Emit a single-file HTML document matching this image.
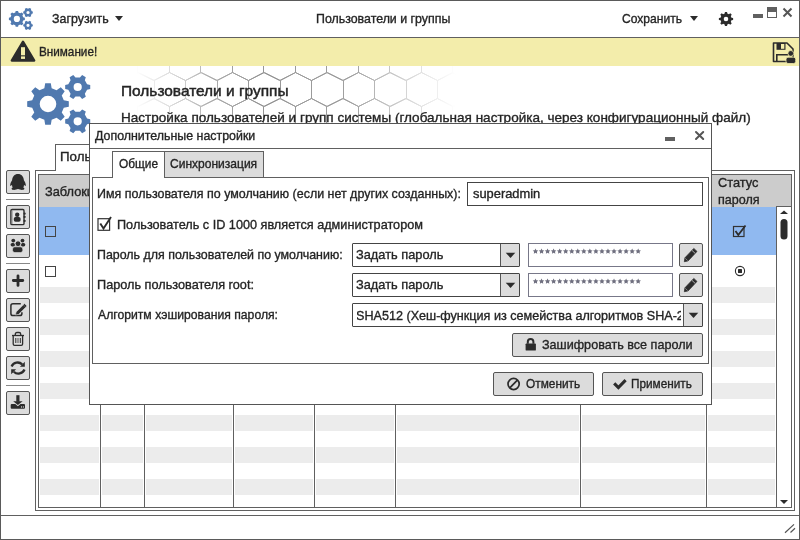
<!DOCTYPE html>
<html><head><meta charset="utf-8"><style>
html,body{margin:0;padding:0;width:800px;height:540px;overflow:hidden;background:#fff}
body{position:relative;font-family:"Liberation Sans", sans-serif}
.t{position:absolute;white-space:nowrap;line-height:1;font-family:"Liberation Sans", sans-serif;-webkit-text-stroke:0.35px currentColor;transform-origin:0 0}
svg{overflow:visible}
</style></head><body>
<div style="position:absolute;left:0px;top:0px;width:800px;height:540px;background:#fff"></div>
<div style="position:absolute;left:0px;top:37px;width:800px;height:1px;background:#606060"></div>
<div style="position:absolute;left:0px;top:38px;width:800px;height:28px;background:#F3EDAB"></div>
<svg width="24" height="22.5" viewBox="0 0 64 60" style="position:absolute;left:9px;top:7.9px">
<g fill="#5079AF" fill-rule="evenodd">
<path d="M16.83,12.21 L17.80,7.74 L24.20,7.74 L25.17,12.21 L29.92,14.18 L33.77,11.71 L38.29,16.23 L35.82,20.08 L37.79,24.83 L42.26,25.80 L42.26,32.20 L37.79,33.17 L35.82,37.92 L38.29,41.77 L33.77,46.29 L29.92,43.82 L25.17,45.79 L24.20,50.26 L17.80,50.26 L16.83,45.79 L12.08,43.82 L8.23,46.29 L3.71,41.77 L6.18,37.92 L4.21,33.17 L-0.26,32.20 L-0.26,25.80 L4.21,24.83 L6.18,20.08 L3.71,16.23 L8.23,11.71 L12.08,14.18Z M29.30,29.00 A8.3,8.3 0 1,0 12.70,29.00 A8.3,8.3 0 1,0 29.30,29.00Z"/><path d="M60.78,8.72 L63.47,9.56 L63.47,14.44 L60.78,15.28 L58.58,19.09 L59.19,21.84 L54.98,24.28 L52.90,22.37 L48.50,22.37 L46.42,24.28 L42.21,21.84 L42.82,19.09 L40.62,15.28 L37.93,14.44 L37.93,9.56 L40.62,8.72 L42.82,4.91 L42.21,2.16 L46.42,-0.28 L48.50,1.63 L52.90,1.63 L54.98,-0.28 L59.19,2.16 L58.58,4.91Z M55.00,12.00 A4.3,4.3 0 1,0 46.40,12.00 A4.3,4.3 0 1,0 55.00,12.00Z"/><path d="M60.78,43.02 L63.47,43.86 L63.47,48.74 L60.78,49.58 L58.58,53.39 L59.19,56.14 L54.98,58.58 L52.90,56.67 L48.50,56.67 L46.42,58.58 L42.21,56.14 L42.82,53.39 L40.62,49.58 L37.93,48.74 L37.93,43.86 L40.62,43.02 L42.82,39.21 L42.21,36.46 L46.42,34.02 L48.50,35.93 L52.90,35.93 L54.98,34.02 L59.19,36.46 L58.58,39.21Z M55.00,46.30 A4.3,4.3 0 1,0 46.40,46.30 A4.3,4.3 0 1,0 55.00,46.30Z"/>
</g></svg>
<div class="t" style="left:51.50px;top:13.26px;font-size:12.8px;color:#242424;transform:scaleX(0.9700);">Загрузить</div>
<div style="position:absolute;left:115px;top:16px;width:0;height:0;border-left:4.5px solid transparent;border-right:4.5px solid transparent;border-top:5px solid #2c2c2c"></div>
<div class="t" style="left:316.05px;top:12.20px;font-size:13px;color:#242424;transform:scaleX(0.9518);">Пользователи и группы</div>
<div class="t" style="left:621.90px;top:13.26px;font-size:12.8px;color:#242424;transform:scaleX(0.9441);">Сохранить</div>
<div style="position:absolute;left:689.5px;top:16px;width:0;height:0;border-left:4.5px solid transparent;border-right:4.5px solid transparent;border-top:5px solid #2c2c2c"></div>
<svg style="position:absolute;left:0;top:0" width="800" height="40"><path fill="#2c2c2c" fill-rule="evenodd" d="M724.69,13.55 L724.93,11.88 L727.07,11.88 L727.31,13.55 L728.93,14.23 L730.28,13.21 L731.79,14.72 L730.77,16.07 L731.45,17.69 L733.12,17.93 L733.12,20.07 L731.45,20.31 L730.77,21.93 L731.79,23.28 L730.28,24.79 L728.93,23.77 L727.31,24.45 L727.07,26.12 L724.93,26.12 L724.69,24.45 L723.07,23.77 L721.72,24.79 L720.21,23.28 L721.23,21.93 L720.55,20.31 L718.88,20.07 L718.88,17.93 L720.55,17.69 L721.23,16.07 L720.21,14.72 L721.72,13.21 L723.07,14.23Z M728.30,19.00 A2.3,2.3 0 1,0 723.70,19.00 A2.3,2.3 0 1,0 728.30,19.00Z"/></svg>
<div style="position:absolute;left:753px;top:14px;width:10px;height:4px;background:#606060"></div>
<div style="position:absolute;left:767px;top:7px;width:10px;height:11px;box-sizing:border-box;border:1px solid #606060;background:#fff;"></div>
<div style="position:absolute;left:767px;top:7px;width:10px;height:5px;background:#606060"></div>
<svg style="position:absolute;left:0;top:0" width="800" height="40"><path d="M783.5,8.5 L791.5,16.5 M791.5,8.5 L783.5,16.5" stroke="#555" stroke-width="2"/></svg>
<svg style="position:absolute;left:0;top:38" width="800" height="28"></svg>
<svg style="position:absolute;left:0;top:0" width="800" height="70">
<path d="M23,41.6 L34.3,60.6 L11.7,60.6 Z" fill="#2c2c2c" stroke="#2c2c2c" stroke-width="2.2" stroke-linejoin="round"/>
<rect x="21" y="47.2" width="4" height="8.1" fill="#F3EDAB"/><rect x="21" y="56.4" width="4" height="2.5" fill="#F3EDAB"/>
</svg>
<div class="t" style="left:38.60px;top:45.40px;font-size:13px;color:#242424;transform:scaleX(0.9007);">Внимание!</div>
<svg style="position:absolute;left:0;top:0" width="800" height="70">
<path d="M773.5,43 H787 L793,49 V61.5 H773.5 Z" fill="none" stroke="#2c2c2c" stroke-width="1.6" stroke-linejoin="round"/>
<rect x="776.5" y="43" width="9" height="6.8" fill="#2c2c2c"/><rect x="781" y="44" width="3.3" height="4.8" fill="#F3EDAB"/>
<path d="M776.8,61.5 V54.8 H788" fill="none" stroke="#2c2c2c" stroke-width="1.6"/>
<circle cx="790.8" cy="53.4" r="2.9" fill="#2c2c2c" stroke="#F3EDAB" stroke-width="0.8"/>
<rect x="786" y="57.2" width="9.7" height="6.3" rx="2" fill="#2c2c2c" stroke="#F3EDAB" stroke-width="0.8"/>
</svg>
<svg width="64" height="60" viewBox="0 0 64 60" style="position:absolute;left:27px;top:75px">
<g fill="#5079AF" fill-rule="evenodd">
<path d="M17.34,13.22 L18.20,8.19 L23.80,8.19 L24.66,13.22 L29.57,15.25 L33.74,12.31 L37.69,16.26 L34.75,20.43 L36.78,25.34 L41.81,26.20 L41.81,31.80 L36.78,32.66 L34.75,37.57 L37.69,41.74 L33.74,45.69 L29.57,42.75 L24.66,44.78 L23.80,49.81 L18.20,49.81 L17.34,44.78 L12.43,42.75 L8.26,45.69 L4.31,41.74 L7.25,37.57 L5.22,32.66 L0.19,31.80 L0.19,26.20 L5.22,25.34 L7.25,20.43 L4.31,16.26 L8.26,12.31 L12.43,15.25Z M29.30,29.00 A8.3,8.3 0 1,0 12.70,29.00 A8.3,8.3 0 1,0 29.30,29.00Z"/><path d="M60.08,9.17 L63.22,9.88 L63.22,14.12 L60.08,14.83 L57.84,18.71 L58.80,21.79 L55.13,23.90 L52.94,21.54 L48.46,21.54 L46.27,23.90 L42.60,21.79 L43.56,18.71 L41.32,14.83 L38.18,14.12 L38.18,9.88 L41.32,9.17 L43.56,5.29 L42.60,2.21 L46.27,0.10 L48.46,2.46 L52.94,2.46 L55.13,0.10 L58.80,2.21 L57.84,5.29Z M54.80,12.00 A4.1,4.1 0 1,0 46.60,12.00 A4.1,4.1 0 1,0 54.80,12.00Z"/><path d="M60.08,43.47 L63.22,44.18 L63.22,48.42 L60.08,49.13 L57.84,53.01 L58.80,56.09 L55.13,58.20 L52.94,55.84 L48.46,55.84 L46.27,58.20 L42.60,56.09 L43.56,53.01 L41.32,49.13 L38.18,48.42 L38.18,44.18 L41.32,43.47 L43.56,39.59 L42.60,36.51 L46.27,34.40 L48.46,36.76 L52.94,36.76 L55.13,34.40 L58.80,36.51 L57.84,39.59Z M54.80,46.30 A4.1,4.1 0 1,0 46.60,46.30 A4.1,4.1 0 1,0 54.80,46.30Z"/>
</g></svg>
<svg style="position:absolute;left:0;top:66px;overflow:hidden" width="800" height="57" viewBox="0 66 800 57"><defs><linearGradient id="hg" x1="0" x2="800" y1="0" y2="0" gradientUnits="userSpaceOnUse"><stop offset="0.17" stop-color="#fff" stop-opacity="0"/><stop offset="0.27" stop-color="#fff" stop-opacity="0.8"/><stop offset="0.32" stop-color="#fff" stop-opacity="1"/><stop offset="0.44" stop-color="#fff" stop-opacity="0.9"/><stop offset="0.5" stop-color="#fff" stop-opacity="0.45"/><stop offset="0.57" stop-color="#fff" stop-opacity="0"/></linearGradient><mask id="hm"><rect x="0" y="0" width="800" height="200" fill="url(#hg)"/></mask></defs><path mask="url(#hm)" fill="none" stroke="#959595" stroke-width="1" d="M90.5,46.5 L106.5,54.5 L106.5,72.5 L90.5,80.5 L74.5,72.5 L74.5,54.5Z M122.5,46.5 L137.5,54.5 L137.5,72.5 L122.5,80.5 L106.5,72.5 L106.5,54.5Z M153.5,46.5 L169.5,54.5 L169.5,72.5 L153.5,80.5 L137.5,72.5 L137.5,54.5Z M185.5,46.5 L200.5,54.5 L200.5,72.5 L185.5,80.5 L169.5,72.5 L169.5,54.5Z M216.5,46.5 L232.5,54.5 L232.5,72.5 L216.5,80.5 L200.5,72.5 L200.5,54.5Z M248.5,46.5 L263.5,54.5 L263.5,72.5 L248.5,80.5 L232.5,72.5 L232.5,54.5Z M279.5,46.5 L295.5,54.5 L295.5,72.5 L279.5,80.5 L263.5,72.5 L263.5,54.5Z M311.5,46.5 L326.5,54.5 L326.5,72.5 L311.5,80.5 L295.5,72.5 L295.5,54.5Z M342.5,46.5 L358.5,54.5 L358.5,72.5 L342.5,80.5 L326.5,72.5 L326.5,54.5Z M374.5,46.5 L389.5,54.5 L389.5,72.5 L374.5,80.5 L358.5,72.5 L358.5,54.5Z M405.5,46.5 L421.5,54.5 L421.5,72.5 L405.5,80.5 L389.5,72.5 L389.5,54.5Z M437.5,46.5 L452.5,54.5 L452.5,72.5 L437.5,80.5 L421.5,72.5 L421.5,54.5Z M468.5,46.5 L484.5,54.5 L484.5,72.5 L468.5,80.5 L452.5,72.5 L452.5,54.5Z M106.5,72.5 L122.5,80.5 L122.5,98.5 L106.5,106.5 L91.5,98.5 L91.5,80.5Z M138.5,72.5 L154.5,80.5 L154.5,98.5 L138.5,106.5 L122.5,98.5 L122.5,80.5Z M169.5,72.5 L185.5,80.5 L185.5,98.5 L169.5,106.5 L154.5,98.5 L154.5,80.5Z M201.5,72.5 L217.5,80.5 L217.5,98.5 L201.5,106.5 L185.5,98.5 L185.5,80.5Z M232.5,72.5 L248.5,80.5 L248.5,98.5 L232.5,106.5 L217.5,98.5 L217.5,80.5Z M264.5,72.5 L280.5,80.5 L280.5,98.5 L264.5,106.5 L248.5,98.5 L248.5,80.5Z M295.5,72.5 L311.5,80.5 L311.5,98.5 L295.5,106.5 L280.5,98.5 L280.5,80.5Z M327.5,72.5 L343.5,80.5 L343.5,98.5 L327.5,106.5 L311.5,98.5 L311.5,80.5Z M358.5,72.5 L374.5,80.5 L374.5,98.5 L358.5,106.5 L343.5,98.5 L343.5,80.5Z M390.5,72.5 L406.5,80.5 L406.5,98.5 L390.5,106.5 L374.5,98.5 L374.5,80.5Z M421.5,72.5 L437.5,80.5 L437.5,98.5 L421.5,106.5 L406.5,98.5 L406.5,80.5Z M453.5,72.5 L469.5,80.5 L469.5,98.5 L453.5,106.5 L437.5,98.5 L437.5,80.5Z M90.5,98.5 L106.5,106.5 L106.5,124.5 L90.5,132.5 L74.5,124.5 L74.5,106.5Z M122.5,98.5 L137.5,106.5 L137.5,124.5 L122.5,132.5 L106.5,124.5 L106.5,106.5Z M153.5,98.5 L169.5,106.5 L169.5,124.5 L153.5,132.5 L137.5,124.5 L137.5,106.5Z M185.5,98.5 L200.5,106.5 L200.5,124.5 L185.5,132.5 L169.5,124.5 L169.5,106.5Z M216.5,98.5 L232.5,106.5 L232.5,124.5 L216.5,132.5 L200.5,124.5 L200.5,106.5Z M248.5,98.5 L263.5,106.5 L263.5,124.5 L248.5,132.5 L232.5,124.5 L232.5,106.5Z M279.5,98.5 L295.5,106.5 L295.5,124.5 L279.5,132.5 L263.5,124.5 L263.5,106.5Z M311.5,98.5 L326.5,106.5 L326.5,124.5 L311.5,132.5 L295.5,124.5 L295.5,106.5Z M342.5,98.5 L358.5,106.5 L358.5,124.5 L342.5,132.5 L326.5,124.5 L326.5,106.5Z M374.5,98.5 L389.5,106.5 L389.5,124.5 L374.5,132.5 L358.5,124.5 L358.5,106.5Z M405.5,98.5 L421.5,106.5 L421.5,124.5 L405.5,132.5 L389.5,124.5 L389.5,106.5Z M437.5,98.5 L452.5,106.5 L452.5,124.5 L437.5,132.5 L421.5,124.5 L421.5,106.5Z M468.5,98.5 L484.5,106.5 L484.5,124.5 L468.5,132.5 L452.5,124.5 L452.5,106.5Z M106.5,124.5 L122.5,132.5 L122.5,150.5 L106.5,158.5 L91.5,150.5 L91.5,132.5Z M138.5,124.5 L154.5,132.5 L154.5,150.5 L138.5,158.5 L122.5,150.5 L122.5,132.5Z M169.5,124.5 L185.5,132.5 L185.5,150.5 L169.5,158.5 L154.5,150.5 L154.5,132.5Z M201.5,124.5 L217.5,132.5 L217.5,150.5 L201.5,158.5 L185.5,150.5 L185.5,132.5Z M232.5,124.5 L248.5,132.5 L248.5,150.5 L232.5,158.5 L217.5,150.5 L217.5,132.5Z M264.5,124.5 L280.5,132.5 L280.5,150.5 L264.5,158.5 L248.5,150.5 L248.5,132.5Z M295.5,124.5 L311.5,132.5 L311.5,150.5 L295.5,158.5 L280.5,150.5 L280.5,132.5Z M327.5,124.5 L343.5,132.5 L343.5,150.5 L327.5,158.5 L311.5,150.5 L311.5,132.5Z M358.5,124.5 L374.5,132.5 L374.5,150.5 L358.5,158.5 L343.5,150.5 L343.5,132.5Z M390.5,124.5 L406.5,132.5 L406.5,150.5 L390.5,158.5 L374.5,150.5 L374.5,132.5Z M421.5,124.5 L437.5,132.5 L437.5,150.5 L421.5,158.5 L406.5,150.5 L406.5,132.5Z M453.5,124.5 L469.5,132.5 L469.5,150.5 L453.5,158.5 L437.5,150.5 L437.5,132.5Z"/></svg>
<div class="t" style="left:120.86px;top:83.57px;font-size:14.8px;color:#242424;transform:scaleX(1.0431);-webkit-text-stroke:0.45px currentColor">Пользователи и группы</div>
<div class="t" style="left:120.78px;top:110.74px;font-size:13.3px;color:#242424;transform:scaleX(1.0179);">Настройка пользователей и групп системы (глобальная настройка, через конфигурационный файл)</div>
<div style="position:absolute;left:6px;top:170px;width:24px;height:24px;box-sizing:border-box;border:1px solid #555;background:#DCDCDC;border-radius:2px"></div>
<svg style="position:absolute;left:6px;top:170px" width="24" height="24" viewBox="0 0 24 24"><path fill="#2c2c2c" d="M12,4 C15.5,4 17.6,6.5 17.9,10.3 C19,11.8 19.8,13.8 19.9,15.9 C19.2,15.8 18.5,15.4 18,15 C18,16.1 17.7,17 17.2,17.6 C18.2,17.8 18.5,18.4 18.3,19 C18,19.7 17.2,19.9 16,19.9 C14.5,19.9 13.2,19.5 12,19.1 C10.8,19.5 9.5,19.9 8,19.9 C6.8,19.9 6,19.7 5.7,19 C5.5,18.4 5.8,17.8 6.8,17.6 C6.3,17 6,16.1 6,15 C5.5,15.4 4.8,15.8 4.1,15.9 C4.2,13.8 5,11.8 6.1,10.3 C6.4,6.5 8.5,4 12,4Z"/></svg>
<div style="position:absolute;left:6px;top:199px;width:24px;height:1px;background:#888"></div>
<div style="position:absolute;left:6px;top:205px;width:24px;height:24px;box-sizing:border-box;border:1px solid #555;background:#DCDCDC;border-radius:2px"></div>
<svg style="position:absolute;left:6px;top:205px" width="24" height="24" viewBox="0 0 24 24"><rect x="4.9" y="4.5" width="13.1" height="15.1" rx="1.2" fill="#e6e6e6" stroke="#2c2c2c" stroke-width="1.4"/><path d="M6.3,5 V19" stroke="#999" stroke-width="0.8"/><circle cx="18.6" cy="8.7" r="1.15" fill="#2c2c2c"/><circle cx="18.6" cy="11.9" r="1.15" fill="#2c2c2c"/><circle cx="18.6" cy="15.9" r="1.15" fill="#2c2c2c"/><circle cx="11.2" cy="9.7" r="2.2" fill="#2c2c2c"/><rect x="7.8" y="12" width="6.8" height="4.7" rx="1.7" fill="#2c2c2c"/></svg>
<div style="position:absolute;left:6px;top:234px;width:24px;height:24px;box-sizing:border-box;border:1px solid #555;background:#DCDCDC;border-radius:2px"></div>
<svg style="position:absolute;left:6px;top:234px" width="24" height="24" viewBox="0 0 24 24"><circle cx="7.3" cy="6.6" r="1.9" fill="#2c2c2c"/><circle cx="16.5" cy="6.6" r="1.9" fill="#2c2c2c"/><rect x="4.6" y="9" width="4.4" height="3.4" rx="1.6" fill="#2c2c2c"/><rect x="14.9" y="9" width="4.4" height="3.4" rx="1.6" fill="#2c2c2c"/><circle cx="12" cy="9.7" r="2.9" fill="#2c2c2c" stroke="#DCDCDC" stroke-width="0.9"/><rect x="6.5" y="12.8" width="10.3" height="5.8" rx="2.3" fill="#2c2c2c" stroke="#DCDCDC" stroke-width="0.7"/></svg>
<div style="position:absolute;left:6px;top:263px;width:24px;height:1px;background:#888"></div>
<div style="position:absolute;left:6px;top:269px;width:24px;height:24px;box-sizing:border-box;border:1px solid #555;background:#DCDCDC;border-radius:2px"></div>
<svg style="position:absolute;left:6px;top:269px" width="24" height="24" viewBox="0 0 24 24"><path d="M7.3,11.5 H16.8 M12,6.8 V16.4" stroke="#2c2c2c" stroke-width="2.8" stroke-linecap="round"/></svg>
<div style="position:absolute;left:6px;top:298px;width:24px;height:24px;box-sizing:border-box;border:1px solid #555;background:#DCDCDC;border-radius:2px"></div>
<svg style="position:absolute;left:6px;top:298px" width="24" height="24" viewBox="0 0 24 24"><path d="M14.8,5.7 H7 Q4.9,5.7 4.9,7.8 V15.5 Q4.9,17.6 7,17.6 H13.8 Q15.9,17.6 15.9,15.5 V14.3" fill="none" stroke="#2c2c2c" stroke-width="1.5"/><path d="M9.5,17 L10.1,14 L18.6,5.6 L21,8 L12.5,16.4Z" fill="#2c2c2c" stroke="#DCDCDC" stroke-width="0.6"/><path d="M17.3,6.9 L19.7,9.3" stroke="#777" stroke-width="0.6"/></svg>
<div style="position:absolute;left:6px;top:327px;width:24px;height:24px;box-sizing:border-box;border:1px solid #555;background:#DCDCDC;border-radius:2px"></div>
<svg style="position:absolute;left:6px;top:327px" width="24" height="24" viewBox="0 0 24 24"><path d="M6,8.5 H18" stroke="#2c2c2c" stroke-width="1.3"/><path d="M9.3,8.3 V7 Q9.3,5.5 11,5.5 H13 Q14.7,5.5 14.7,7 V8.3" fill="none" stroke="#2c2c2c" stroke-width="1.3"/><path d="M7.2,8.8 V17 Q7.2,18.4 8.6,18.4 H15.2 Q16.6,18.4 16.6,17 V8.8" fill="none" stroke="#2c2c2c" stroke-width="1.3"/><path d="M9.8,11 V16 M14.3,11 V16" stroke="#2c2c2c" stroke-width="1"/><path d="M12,11 V16" stroke="#888" stroke-width="1.6"/></svg>
<div style="position:absolute;left:6px;top:356px;width:24px;height:24px;box-sizing:border-box;border:1px solid #555;background:#DCDCDC;border-radius:2px"></div>
<svg style="position:absolute;left:6px;top:356px" width="24" height="24" viewBox="0 0 24 24"><path d="M5.6,10.5 A6.6,6.6 0 0,1 16.2,8.3" fill="none" stroke="#2c2c2c" stroke-width="2.3"/><path d="M18.8,5.8 V10.7 H13.9Z" fill="#2c2c2c"/><path d="M18.5,13.5 A6.6,6.6 0 0,1 7.8,15.7" fill="none" stroke="#2c2c2c" stroke-width="2.3"/><path d="M5.2,18.2 V13.3 H10.1Z" fill="#2c2c2c"/></svg>
<div style="position:absolute;left:6px;top:385px;width:24px;height:1px;background:#888"></div>
<div style="position:absolute;left:6px;top:391px;width:24px;height:24px;box-sizing:border-box;border:1px solid #555;background:#DCDCDC;border-radius:2px"></div>
<svg style="position:absolute;left:6px;top:391px" width="24" height="24" viewBox="0 0 24 24"><rect x="10.3" y="4.2" width="3.2" height="6.6" fill="#2c2c2c"/><path d="M7.2,10.3 H16.6 L11.9,14Z" fill="#2c2c2c"/><path d="M5.7,13 H9.3 L11.9,15.3 L14.5,13 H18 Q19,13 19,14 V16.8 Q19,17.8 18,17.8 H5.7 Q4.7,17.8 4.7,16.8 V14 Q4.7,13 5.7,13Z" fill="#2c2c2c"/><rect x="15.1" y="15.1" width="0.9" height="1.7" fill="#bbb"/><rect x="16.9" y="15.1" width="0.9" height="1.7" fill="#bbb"/></svg>
<div style="position:absolute;left:55px;top:144px;width:66px;height:28px;box-sizing:border-box;border:1px solid #606060;background:#fff;"></div>
<div style="position:absolute;left:35px;top:170px;width:760px;height:341px;box-sizing:border-box;border:1px solid #606060;background:#fff;"></div>
<div style="position:absolute;left:56px;top:170px;width:63px;height:1px;background:#fff"></div>
<div class="t" style="left:60.48px;top:150.10px;font-size:13px;color:#242424;transform:scaleX(1.0243);">Пользователи</div>
<div style="position:absolute;left:38px;top:174px;width:754px;height:334px;box-sizing:border-box;border:1px solid #606060;background:#fff;"></div>
<div style="position:absolute;left:39px;top:175px;width:752px;height:32px;background:#CCCCCC"></div>
<div class="t" style="left:45.10px;top:186.46px;font-size:12.8px;color:#242424;transform:scaleX(0.9980);">Заблокирован</div>
<div class="t" style="left:718.00px;top:176.30px;font-size:13px;color:#242424;transform:scaleX(0.9857);">Статус</div>
<div class="t" style="left:718.30px;top:192.90px;font-size:13px;color:#242424;transform:scaleX(0.9645);">пароля</div>
<div style="position:absolute;left:39px;top:207px;width:737px;height:48px;background:#90B9F0"></div>
<div style="position:absolute;left:40px;top:287px;width:59px;height:16px;background:#ECECEC"></div>
<div style="position:absolute;left:102px;top:287px;width:41px;height:16px;background:#ECECEC"></div>
<div style="position:absolute;left:146px;top:287px;width:86px;height:16px;background:#ECECEC"></div>
<div style="position:absolute;left:235px;top:287px;width:78px;height:16px;background:#ECECEC"></div>
<div style="position:absolute;left:316px;top:287px;width:78px;height:16px;background:#ECECEC"></div>
<div style="position:absolute;left:397px;top:287px;width:182px;height:16px;background:#ECECEC"></div>
<div style="position:absolute;left:582px;top:287px;width:123px;height:16px;background:#ECECEC"></div>
<div style="position:absolute;left:708px;top:287px;width:67px;height:16px;background:#ECECEC"></div>
<div style="position:absolute;left:40px;top:319px;width:59px;height:16px;background:#ECECEC"></div>
<div style="position:absolute;left:102px;top:319px;width:41px;height:16px;background:#ECECEC"></div>
<div style="position:absolute;left:146px;top:319px;width:86px;height:16px;background:#ECECEC"></div>
<div style="position:absolute;left:235px;top:319px;width:78px;height:16px;background:#ECECEC"></div>
<div style="position:absolute;left:316px;top:319px;width:78px;height:16px;background:#ECECEC"></div>
<div style="position:absolute;left:397px;top:319px;width:182px;height:16px;background:#ECECEC"></div>
<div style="position:absolute;left:582px;top:319px;width:123px;height:16px;background:#ECECEC"></div>
<div style="position:absolute;left:708px;top:319px;width:67px;height:16px;background:#ECECEC"></div>
<div style="position:absolute;left:40px;top:351px;width:59px;height:16px;background:#ECECEC"></div>
<div style="position:absolute;left:102px;top:351px;width:41px;height:16px;background:#ECECEC"></div>
<div style="position:absolute;left:146px;top:351px;width:86px;height:16px;background:#ECECEC"></div>
<div style="position:absolute;left:235px;top:351px;width:78px;height:16px;background:#ECECEC"></div>
<div style="position:absolute;left:316px;top:351px;width:78px;height:16px;background:#ECECEC"></div>
<div style="position:absolute;left:397px;top:351px;width:182px;height:16px;background:#ECECEC"></div>
<div style="position:absolute;left:582px;top:351px;width:123px;height:16px;background:#ECECEC"></div>
<div style="position:absolute;left:708px;top:351px;width:67px;height:16px;background:#ECECEC"></div>
<div style="position:absolute;left:40px;top:383px;width:59px;height:16px;background:#ECECEC"></div>
<div style="position:absolute;left:102px;top:383px;width:41px;height:16px;background:#ECECEC"></div>
<div style="position:absolute;left:146px;top:383px;width:86px;height:16px;background:#ECECEC"></div>
<div style="position:absolute;left:235px;top:383px;width:78px;height:16px;background:#ECECEC"></div>
<div style="position:absolute;left:316px;top:383px;width:78px;height:16px;background:#ECECEC"></div>
<div style="position:absolute;left:397px;top:383px;width:182px;height:16px;background:#ECECEC"></div>
<div style="position:absolute;left:582px;top:383px;width:123px;height:16px;background:#ECECEC"></div>
<div style="position:absolute;left:708px;top:383px;width:67px;height:16px;background:#ECECEC"></div>
<div style="position:absolute;left:40px;top:415px;width:59px;height:16px;background:#ECECEC"></div>
<div style="position:absolute;left:102px;top:415px;width:41px;height:16px;background:#ECECEC"></div>
<div style="position:absolute;left:146px;top:415px;width:86px;height:16px;background:#ECECEC"></div>
<div style="position:absolute;left:235px;top:415px;width:78px;height:16px;background:#ECECEC"></div>
<div style="position:absolute;left:316px;top:415px;width:78px;height:16px;background:#ECECEC"></div>
<div style="position:absolute;left:397px;top:415px;width:182px;height:16px;background:#ECECEC"></div>
<div style="position:absolute;left:582px;top:415px;width:123px;height:16px;background:#ECECEC"></div>
<div style="position:absolute;left:708px;top:415px;width:67px;height:16px;background:#ECECEC"></div>
<div style="position:absolute;left:40px;top:447px;width:59px;height:16px;background:#ECECEC"></div>
<div style="position:absolute;left:102px;top:447px;width:41px;height:16px;background:#ECECEC"></div>
<div style="position:absolute;left:146px;top:447px;width:86px;height:16px;background:#ECECEC"></div>
<div style="position:absolute;left:235px;top:447px;width:78px;height:16px;background:#ECECEC"></div>
<div style="position:absolute;left:316px;top:447px;width:78px;height:16px;background:#ECECEC"></div>
<div style="position:absolute;left:397px;top:447px;width:182px;height:16px;background:#ECECEC"></div>
<div style="position:absolute;left:582px;top:447px;width:123px;height:16px;background:#ECECEC"></div>
<div style="position:absolute;left:708px;top:447px;width:67px;height:16px;background:#ECECEC"></div>
<div style="position:absolute;left:40px;top:479px;width:59px;height:16px;background:#ECECEC"></div>
<div style="position:absolute;left:102px;top:479px;width:41px;height:16px;background:#ECECEC"></div>
<div style="position:absolute;left:146px;top:479px;width:86px;height:16px;background:#ECECEC"></div>
<div style="position:absolute;left:235px;top:479px;width:78px;height:16px;background:#ECECEC"></div>
<div style="position:absolute;left:316px;top:479px;width:78px;height:16px;background:#ECECEC"></div>
<div style="position:absolute;left:397px;top:479px;width:182px;height:16px;background:#ECECEC"></div>
<div style="position:absolute;left:582px;top:479px;width:123px;height:16px;background:#ECECEC"></div>
<div style="position:absolute;left:708px;top:479px;width:67px;height:16px;background:#ECECEC"></div>
<div style="position:absolute;left:100px;top:207px;width:1px;height:300px;background:#606060"></div>
<div style="position:absolute;left:144px;top:207px;width:1px;height:300px;background:#606060"></div>
<div style="position:absolute;left:233px;top:207px;width:1px;height:300px;background:#606060"></div>
<div style="position:absolute;left:314px;top:207px;width:1px;height:300px;background:#606060"></div>
<div style="position:absolute;left:395px;top:207px;width:1px;height:300px;background:#606060"></div>
<div style="position:absolute;left:580px;top:207px;width:1px;height:300px;background:#606060"></div>
<div style="position:absolute;left:706px;top:207px;width:1px;height:300px;background:#606060"></div>
<div style="position:absolute;left:45px;top:226px;width:11px;height:11px;box-sizing:border-box;border:1px solid #444;background:#90B9F0;"></div>
<div style="position:absolute;left:45px;top:266px;width:11px;height:11px;box-sizing:border-box;border:1px solid #444;background:#fff;"></div>
<svg style="position:absolute;left:0;top:0" width="800" height="540"><rect x="733.5" y="226.5" width="10.5" height="10" fill="none" stroke="#333" stroke-width="1.2"/><path d="M735.5,231 L738.3,235 L745.5,225.5" fill="none" stroke="#2c2c2c" stroke-width="1.8"/><circle cx="740" cy="271" r="4.6" fill="#fff" stroke="#2c2c2c" stroke-width="1.1"/><rect x="738" y="269" width="4" height="4" rx="0.5" fill="#2c2c2c"/></svg>
<div style="position:absolute;left:776px;top:206px;width:16px;height:302px;box-sizing:border-box;border:1px solid #606060;background:#fff;"></div>
<svg style="position:absolute;left:0;top:0" width="800" height="540"><path d="M780,214 L788,214 L784,210.5Z" fill="#2c2c2c"/><rect x="780.5" y="219" width="7" height="20.5" rx="3.5" fill="#2c2c2c"/><path d="M780,500 L788,500 L784,504Z" fill="#2c2c2c"/></svg>
<div style="position:absolute;left:0px;top:515px;width:800px;height:1px;background:#606060"></div>
<svg style="position:absolute;left:0;top:0" width="800" height="540"><path d="M785,532.8 L794,524.4 M790.5,532.5 L795,528.3" stroke="#555" stroke-width="1.2"/></svg>
<div style="position:absolute;left:89px;top:123px;width:623px;height:282px;box-sizing:border-box;border:1px solid #555;background:#fff;"></div>
<div style="position:absolute;left:90px;top:148px;width:621px;height:1px;background:#606060"></div>
<div class="t" style="left:94.50px;top:128.83px;font-size:13.2px;color:#242424;transform:scaleX(0.9400);">Дополнительные настройки</div>
<div style="position:absolute;left:665px;top:137px;width:10px;height:4px;background:#606060"></div>
<svg style="position:absolute;left:0;top:0" width="800" height="540"><path d="M696,132 L703.2,139 M703.2,132 L696,139" stroke="#555" stroke-width="2" stroke-linecap="round"/></svg>
<div style="position:absolute;left:92px;top:177px;width:617px;height:187px;box-sizing:border-box;border:1px solid #606060;background:#fff;"></div>
<div style="position:absolute;left:164px;top:151px;width:100px;height:27px;box-sizing:border-box;border:1px solid #606060;background:#DCDCDC;"></div>
<div style="position:absolute;left:112px;top:151px;width:53px;height:27px;box-sizing:border-box;border:1px solid #606060;background:#fff;"></div>
<div style="position:absolute;left:113px;top:177px;width:51px;height:1px;background:#fff"></div>
<div class="t" style="left:118.80px;top:158.26px;font-size:12.8px;color:#242424;transform:scaleX(0.9271);">Общие</div>
<div class="t" style="left:170.40px;top:158.26px;font-size:12.8px;color:#242424;transform:scaleX(0.9400);">Синхронизация</div>
<div class="t" style="left:96.65px;top:187.31px;font-size:13.1px;color:#242424;transform:scaleX(0.9514);">Имя пользователя по умолчанию (если нет других созданных):</div>
<div style="position:absolute;left:467px;top:182px;width:236px;height:24px;box-sizing:border-box;border:1px solid #444;background:#fff;"></div>
<div class="t" style="left:472.50px;top:188.43px;font-size:12.6px;color:#242424;transform:scaleX(1.0220);">superadmin</div>
<svg style="position:absolute;left:0;top:0" width="800" height="540"><rect x="98" y="218.7" width="11.6" height="11.6" fill="#fff" stroke="#333" stroke-width="1.2"/><path d="M100.3,223.5 L103.5,228.5 L111,217" fill="none" stroke="#2c2c2c" stroke-width="1.9"/></svg>
<div class="t" style="left:116.53px;top:218.31px;font-size:13.1px;color:#242424;transform:scaleX(0.9681);">Пользователь с ID 1000 является администратором</div>
<div class="t" style="left:96.65px;top:247.51px;font-size:13.1px;color:#242424;transform:scaleX(0.9485);">Пароль для пользователей по умолчанию:</div>
<div class="t" style="left:96.63px;top:277.76px;font-size:13.1px;color:#242424;transform:scaleX(0.9701);">Пароль пользователя root:</div>
<div class="t" style="left:97.60px;top:307.76px;font-size:13.1px;color:#242424;transform:scaleX(0.9308);">Алгоритм хэширования пароля:</div>
<div style="position:absolute;left:352px;top:243px;width:168px;height:24px;box-sizing:border-box;border:1px solid #444;background:#fff;border-radius:1px"></div>
<div style="position:absolute;left:500px;top:244px;width:19px;height:22px;background:#DCDCDC;border-left:1px solid #555;box-sizing:border-box"></div>
<svg style="position:absolute;left:0;top:0" width="800" height="540"><path d="M505.70,252.80 h9.6 l-4.8,5.1z" fill="#2c2c2c"/></svg>
<div class="t" style="left:356.25px;top:247.84px;font-size:13.3px;color:#242424;transform:scaleX(0.9631);">Задать пароль</div>
<div style="position:absolute;left:352px;top:273px;width:168px;height:24px;box-sizing:border-box;border:1px solid #444;background:#fff;border-radius:1px"></div>
<div style="position:absolute;left:500px;top:274px;width:19px;height:22px;background:#DCDCDC;border-left:1px solid #555;box-sizing:border-box"></div>
<svg style="position:absolute;left:0;top:0" width="800" height="540"><path d="M505.70,282.80 h9.6 l-4.8,5.1z" fill="#2c2c2c"/></svg>
<div class="t" style="left:356.25px;top:277.74px;font-size:13.3px;color:#242424;transform:scaleX(0.9631);">Задать пароль</div>
<div style="position:absolute;left:352px;top:303px;width:351px;height:24px;box-sizing:border-box;border:1px solid #444;background:#fff;border-radius:1px"></div>
<div style="position:absolute;left:683px;top:304px;width:19px;height:22px;background:#DCDCDC;border-left:1px solid #555;box-sizing:border-box"></div>
<svg style="position:absolute;left:0;top:0" width="800" height="540"><path d="M688.70,312.80 h9.6 l-4.8,5.1z" fill="#2c2c2c"/></svg>
<div style="position:absolute;left:356.5px;top:303px;width:324px;height:23px;overflow:hidden">
<div class="t" style="left:-0.90px;top:5.83px;font-size:13.2px;color:#242424;transform:scaleX(0.9555);">SHA512 (Хеш-функция из семейства алгоритмов SHA-2)</div>
</div>
<div style="position:absolute;left:528px;top:243px;width:145px;height:24px;box-sizing:border-box;border:1px solid #777788;background:#fff;"></div>
<svg style="position:absolute;left:0;top:0" width="800" height="540"><path fill="#6f6f7f" d="M535.50,248.40 L536.35,250.13 L538.26,250.40 L536.88,251.75 L537.20,253.65 L535.50,252.75 L533.80,253.65 L534.12,251.75 L532.74,250.40 L534.65,250.13Z M541.54,248.40 L542.39,250.13 L544.30,250.40 L542.92,251.75 L543.24,253.65 L541.54,252.75 L539.84,253.65 L540.16,251.75 L538.78,250.40 L540.69,250.13Z M547.58,248.40 L548.43,250.13 L550.34,250.40 L548.96,251.75 L549.28,253.65 L547.58,252.75 L545.88,253.65 L546.20,251.75 L544.82,250.40 L546.73,250.13Z M553.62,248.40 L554.47,250.13 L556.38,250.40 L555.00,251.75 L555.32,253.65 L553.62,252.75 L551.92,253.65 L552.24,251.75 L550.86,250.40 L552.77,250.13Z M559.66,248.40 L560.51,250.13 L562.42,250.40 L561.04,251.75 L561.36,253.65 L559.66,252.75 L557.96,253.65 L558.28,251.75 L556.90,250.40 L558.81,250.13Z M565.70,248.40 L566.55,250.13 L568.46,250.40 L567.08,251.75 L567.40,253.65 L565.70,252.75 L564.00,253.65 L564.32,251.75 L562.94,250.40 L564.85,250.13Z M571.74,248.40 L572.59,250.13 L574.50,250.40 L573.12,251.75 L573.44,253.65 L571.74,252.75 L570.04,253.65 L570.36,251.75 L568.98,250.40 L570.89,250.13Z M577.78,248.40 L578.63,250.13 L580.54,250.40 L579.16,251.75 L579.48,253.65 L577.78,252.75 L576.08,253.65 L576.40,251.75 L575.02,250.40 L576.93,250.13Z M583.82,248.40 L584.67,250.13 L586.58,250.40 L585.20,251.75 L585.52,253.65 L583.82,252.75 L582.12,253.65 L582.44,251.75 L581.06,250.40 L582.97,250.13Z M589.86,248.40 L590.71,250.13 L592.62,250.40 L591.24,251.75 L591.56,253.65 L589.86,252.75 L588.16,253.65 L588.48,251.75 L587.10,250.40 L589.01,250.13Z M595.90,248.40 L596.75,250.13 L598.66,250.40 L597.28,251.75 L597.60,253.65 L595.90,252.75 L594.20,253.65 L594.52,251.75 L593.14,250.40 L595.05,250.13Z M601.94,248.40 L602.79,250.13 L604.70,250.40 L603.32,251.75 L603.64,253.65 L601.94,252.75 L600.24,253.65 L600.56,251.75 L599.18,250.40 L601.09,250.13Z M607.98,248.40 L608.83,250.13 L610.74,250.40 L609.36,251.75 L609.68,253.65 L607.98,252.75 L606.28,253.65 L606.60,251.75 L605.22,250.40 L607.13,250.13Z M614.02,248.40 L614.87,250.13 L616.78,250.40 L615.40,251.75 L615.72,253.65 L614.02,252.75 L612.32,253.65 L612.64,251.75 L611.26,250.40 L613.17,250.13Z M620.06,248.40 L620.91,250.13 L622.82,250.40 L621.44,251.75 L621.76,253.65 L620.06,252.75 L618.36,253.65 L618.68,251.75 L617.30,250.40 L619.21,250.13Z M626.10,248.40 L626.95,250.13 L628.86,250.40 L627.48,251.75 L627.80,253.65 L626.10,252.75 L624.40,253.65 L624.72,251.75 L623.34,250.40 L625.25,250.13Z M632.14,248.40 L632.99,250.13 L634.90,250.40 L633.52,251.75 L633.84,253.65 L632.14,252.75 L630.44,253.65 L630.76,251.75 L629.38,250.40 L631.29,250.13Z M638.18,248.40 L639.03,250.13 L640.94,250.40 L639.56,251.75 L639.88,253.65 L638.18,252.75 L636.48,253.65 L636.80,251.75 L635.42,250.40 L637.33,250.13Z"/></svg>
<div style="position:absolute;left:679px;top:243px;width:24px;height:24px;box-sizing:border-box;border:1px solid #555;background:#DCDCDC;border-radius:2px"></div>
<svg style="position:absolute;left:679px;top:243px" width="24" height="24" viewBox="0 0 24 24"><path d="M5.3,18.7 L5.89,14.86 L14.8,5.39 L18.0,8.41 L9.09,17.88 Z" fill="#2c2c2c" stroke="#2c2c2c" stroke-width="0.7" stroke-linejoin="round"/><path d="M12.95,7.36 L16.15,10.38" stroke="#CFCFCF" stroke-width="0.8"/><path d="M6.2,15.3 L8.7,17.6" stroke="#888" stroke-width="0.9"/></svg>
<div style="position:absolute;left:528px;top:273px;width:145px;height:24px;box-sizing:border-box;border:1px solid #777788;background:#fff;"></div>
<svg style="position:absolute;left:0;top:0" width="800" height="540"><path fill="#6f6f7f" d="M535.50,278.40 L536.35,280.13 L538.26,280.40 L536.88,281.75 L537.20,283.65 L535.50,282.75 L533.80,283.65 L534.12,281.75 L532.74,280.40 L534.65,280.13Z M541.54,278.40 L542.39,280.13 L544.30,280.40 L542.92,281.75 L543.24,283.65 L541.54,282.75 L539.84,283.65 L540.16,281.75 L538.78,280.40 L540.69,280.13Z M547.58,278.40 L548.43,280.13 L550.34,280.40 L548.96,281.75 L549.28,283.65 L547.58,282.75 L545.88,283.65 L546.20,281.75 L544.82,280.40 L546.73,280.13Z M553.62,278.40 L554.47,280.13 L556.38,280.40 L555.00,281.75 L555.32,283.65 L553.62,282.75 L551.92,283.65 L552.24,281.75 L550.86,280.40 L552.77,280.13Z M559.66,278.40 L560.51,280.13 L562.42,280.40 L561.04,281.75 L561.36,283.65 L559.66,282.75 L557.96,283.65 L558.28,281.75 L556.90,280.40 L558.81,280.13Z M565.70,278.40 L566.55,280.13 L568.46,280.40 L567.08,281.75 L567.40,283.65 L565.70,282.75 L564.00,283.65 L564.32,281.75 L562.94,280.40 L564.85,280.13Z M571.74,278.40 L572.59,280.13 L574.50,280.40 L573.12,281.75 L573.44,283.65 L571.74,282.75 L570.04,283.65 L570.36,281.75 L568.98,280.40 L570.89,280.13Z M577.78,278.40 L578.63,280.13 L580.54,280.40 L579.16,281.75 L579.48,283.65 L577.78,282.75 L576.08,283.65 L576.40,281.75 L575.02,280.40 L576.93,280.13Z M583.82,278.40 L584.67,280.13 L586.58,280.40 L585.20,281.75 L585.52,283.65 L583.82,282.75 L582.12,283.65 L582.44,281.75 L581.06,280.40 L582.97,280.13Z M589.86,278.40 L590.71,280.13 L592.62,280.40 L591.24,281.75 L591.56,283.65 L589.86,282.75 L588.16,283.65 L588.48,281.75 L587.10,280.40 L589.01,280.13Z M595.90,278.40 L596.75,280.13 L598.66,280.40 L597.28,281.75 L597.60,283.65 L595.90,282.75 L594.20,283.65 L594.52,281.75 L593.14,280.40 L595.05,280.13Z M601.94,278.40 L602.79,280.13 L604.70,280.40 L603.32,281.75 L603.64,283.65 L601.94,282.75 L600.24,283.65 L600.56,281.75 L599.18,280.40 L601.09,280.13Z M607.98,278.40 L608.83,280.13 L610.74,280.40 L609.36,281.75 L609.68,283.65 L607.98,282.75 L606.28,283.65 L606.60,281.75 L605.22,280.40 L607.13,280.13Z M614.02,278.40 L614.87,280.13 L616.78,280.40 L615.40,281.75 L615.72,283.65 L614.02,282.75 L612.32,283.65 L612.64,281.75 L611.26,280.40 L613.17,280.13Z M620.06,278.40 L620.91,280.13 L622.82,280.40 L621.44,281.75 L621.76,283.65 L620.06,282.75 L618.36,283.65 L618.68,281.75 L617.30,280.40 L619.21,280.13Z M626.10,278.40 L626.95,280.13 L628.86,280.40 L627.48,281.75 L627.80,283.65 L626.10,282.75 L624.40,283.65 L624.72,281.75 L623.34,280.40 L625.25,280.13Z M632.14,278.40 L632.99,280.13 L634.90,280.40 L633.52,281.75 L633.84,283.65 L632.14,282.75 L630.44,283.65 L630.76,281.75 L629.38,280.40 L631.29,280.13Z M638.18,278.40 L639.03,280.13 L640.94,280.40 L639.56,281.75 L639.88,283.65 L638.18,282.75 L636.48,283.65 L636.80,281.75 L635.42,280.40 L637.33,280.13Z"/></svg>
<div style="position:absolute;left:679px;top:273px;width:24px;height:24px;box-sizing:border-box;border:1px solid #555;background:#DCDCDC;border-radius:2px"></div>
<svg style="position:absolute;left:679px;top:273px" width="24" height="24" viewBox="0 0 24 24"><path d="M5.3,18.7 L5.89,14.86 L14.8,5.39 L18.0,8.41 L9.09,17.88 Z" fill="#2c2c2c" stroke="#2c2c2c" stroke-width="0.7" stroke-linejoin="round"/><path d="M12.95,7.36 L16.15,10.38" stroke="#CFCFCF" stroke-width="0.8"/><path d="M6.2,15.3 L8.7,17.6" stroke="#888" stroke-width="0.9"/></svg>
<div style="position:absolute;left:512px;top:333px;width:191px;height:24px;box-sizing:border-box;border:1px solid #555;background:#DCDCDC;border-radius:2px"></div>
<svg style="position:absolute;left:0;top:0" width="800" height="540"><path d="M527.8,343.8 V341.8 A2.8,2.8 0 0,1 533.4,341.8 V343.8" fill="none" stroke="#2c2c2c" stroke-width="2"/><rect x="525.6" y="343.4" width="10.3" height="7.2" rx="0.9" fill="#2c2c2c"/></svg>
<div class="t" style="left:541.80px;top:337.63px;font-size:13.2px;color:#242424;transform:scaleX(0.9552);">Зашифровать все пароли</div>
<div style="position:absolute;left:493px;top:372px;width:101px;height:24px;box-sizing:border-box;border:1px solid #555;background:#DCDCDC;border-radius:2px"></div>
<svg style="position:absolute;left:0;top:0" width="800" height="540"><circle cx="513.6" cy="384" r="5.6" fill="none" stroke="#2c2c2c" stroke-width="1.7"/><path d="M509.8,387.8 L517.4,380.2" stroke="#2c2c2c" stroke-width="1.7"/></svg>
<div class="t" style="left:525.60px;top:376.54px;font-size:13.3px;color:#242424;transform:scaleX(0.8910);">Отменить</div>
<div style="position:absolute;left:602px;top:372px;width:101px;height:24px;box-sizing:border-box;border:1px solid #555;background:#DCDCDC;border-radius:2px"></div>
<svg style="position:absolute;left:0;top:0" width="800" height="540"><path d="M614.2,383.3 L618.4,387.5 L625.6,380.2" fill="none" stroke="#2c2c2c" stroke-width="3.1"/></svg>
<div class="t" style="left:631.03px;top:376.67px;font-size:13.5px;color:#242424;transform:scaleX(0.8731);">Применить</div>
<div style="position:absolute;left:0px;top:0px;width:800px;height:540px;box-sizing:border-box;border:1px solid #5a5a5a"></div>
</body></html>
